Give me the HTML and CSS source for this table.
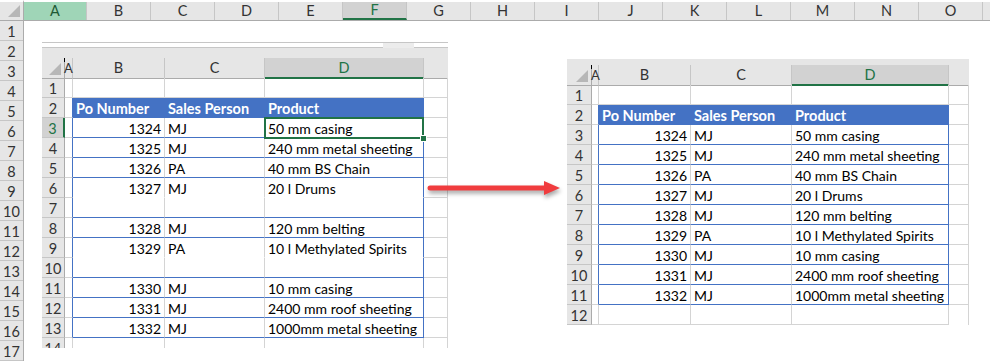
FILE: index.html
```html
<!DOCTYPE html>
<html lang="en">
<head>
    <meta charset="UTF-8">
    <meta name="viewport" content="width=device-width, initial-scale=1.0">
    <title>Remove blank rows</title>
    <link rel="stylesheet" href="styles.css">
</head>
<body>
    <div class="page">
        <div class="sheet">
            <div class="corner"></div>
            <div class="col-heads">
                <div class="ch picked">A</div>
                <div class="ch">B</div>
                <div class="ch">C</div>
                <div class="ch">D</div>
                <div class="ch">E</div>
                <div class="ch cur">F</div>
                <div class="ch">G</div>
                <div class="ch">H</div>
                <div class="ch">I</div>
                <div class="ch">J</div>
                <div class="ch">K</div>
                <div class="ch">L</div>
                <div class="ch">M</div>
                <div class="ch">N</div>
                <div class="ch">O</div>
                <div class="ch rest"></div>
            </div>
            <div class="row-heads">
                <div class="rh">1</div>
                <div class="rh">2</div>
                <div class="rh">3</div>
                <div class="rh">4</div>
                <div class="rh">5</div>
                <div class="rh">6</div>
                <div class="rh">7</div>
                <div class="rh">8</div>
                <div class="rh">9</div>
                <div class="rh">10</div>
                <div class="rh">11</div>
                <div class="rh">12</div>
                <div class="rh">13</div>
                <div class="rh">14</div>
                <div class="rh">15</div>
                <div class="rh">16</div>
                <div class="rh">17</div>
            </div>
            <div class="cells"></div>
        </div>

        <!-- before: records with blank rows -->
        <div class="shot before">
            <div class="bar"><span class="bar-tab"></span></div>
            <div class="row head">
                <div class="corner-sm"></div><div class="hc col-a">A</div><div class="hc">B</div><div class="hc">C</div><div class="hc cur">D</div><div class="hc"></div>
            </div>
            <div class="row">
                <div class="rh">1</div><div class="c"></div><div class="c"></div><div class="c"></div><div class="c"></div><div class="c"></div>
            </div>
            <div class="row thead">
                <div class="rh">2</div><div class="c"></div><div class="c">Po Number</div><div class="c">Sales Person</div><div class="c">Product</div><div class="c"></div>
            </div>
            <div class="row rec">
                <div class="rh cur">3</div><div class="c"></div><div class="c num">1324</div><div class="c">MJ</div><div class="c">50 mm casing</div><div class="c"></div>
            </div>
            <div class="row rec">
                <div class="rh">4</div><div class="c"></div><div class="c num">1325</div><div class="c">MJ</div><div class="c">240 mm metal sheeting</div><div class="c"></div>
            </div>
            <div class="row rec">
                <div class="rh">5</div><div class="c"></div><div class="c num">1326</div><div class="c">PA</div><div class="c">40 mm BS Chain</div><div class="c"></div>
            </div>
            <div class="row rec open">
                <div class="rh">6</div><div class="c"></div><div class="c num">1327</div><div class="c">MJ</div><div class="c">20 l Drums</div><div class="c"></div>
            </div>
            <div class="row rec">
                <div class="rh">7</div><div class="c"></div><div class="c"></div><div class="c"></div><div class="c"></div><div class="c"></div>
            </div>
            <div class="row rec">
                <div class="rh">8</div><div class="c"></div><div class="c num">1328</div><div class="c">MJ</div><div class="c">120 mm belting</div><div class="c"></div>
            </div>
            <div class="row rec open">
                <div class="rh">9</div><div class="c"></div><div class="c num">1329</div><div class="c">PA</div><div class="c">10 l Methylated Spirits</div><div class="c"></div>
            </div>
            <div class="row rec">
                <div class="rh">10</div><div class="c"></div><div class="c"></div><div class="c"></div><div class="c"></div><div class="c"></div>
            </div>
            <div class="row rec">
                <div class="rh">11</div><div class="c"></div><div class="c num">1330</div><div class="c">MJ</div><div class="c">10 mm casing</div><div class="c"></div>
            </div>
            <div class="row rec">
                <div class="rh">12</div><div class="c"></div><div class="c num">1331</div><div class="c">MJ</div><div class="c">2400 mm roof sheeting</div><div class="c"></div>
            </div>
            <div class="row rec">
                <div class="rh">13</div><div class="c"></div><div class="c num">1332</div><div class="c">MJ</div><div class="c">1000mm metal sheeting</div><div class="c"></div>
            </div>
            <div class="row">
                <div class="rh">14</div><div class="c"></div><div class="c"></div><div class="c"></div><div class="c"></div><div class="c"></div>
            </div>
            <div class="sel"></div>
        </div>

        <svg class="arrow" width="140" height="26" viewBox="0 0 140 26">
            <line x1="4" y1="10" x2="120" y2="10" stroke="#f03c3e" stroke-width="5" stroke-linecap="round"/>
            <polygon points="118,3 134,10 118,17" fill="#f03c3e"/>
        </svg>

        <!-- after: blank rows removed -->
        <div class="shot after">
            <div class="bar"></div>
            <div class="row head">
                <div class="corner-sm"></div><div class="hc col-a">A</div><div class="hc">B</div><div class="hc">C</div><div class="hc cur">D</div><div class="hc"></div>
            </div>
            <div class="row">
                <div class="rh">1</div><div class="c"></div><div class="c"></div><div class="c"></div><div class="c"></div><div class="c"></div>
            </div>
            <div class="row thead">
                <div class="rh">2</div><div class="c"></div><div class="c">Po Number</div><div class="c">Sales Person</div><div class="c">Product</div><div class="c"></div>
            </div>
            <div class="row rec">
                <div class="rh">3</div><div class="c"></div><div class="c num">1324</div><div class="c">MJ</div><div class="c">50 mm casing</div><div class="c"></div>
            </div>
            <div class="row rec">
                <div class="rh">4</div><div class="c"></div><div class="c num">1325</div><div class="c">MJ</div><div class="c">240 mm metal sheeting</div><div class="c"></div>
            </div>
            <div class="row rec">
                <div class="rh">5</div><div class="c"></div><div class="c num">1326</div><div class="c">PA</div><div class="c">40 mm BS Chain</div><div class="c"></div>
            </div>
            <div class="row rec">
                <div class="rh">6</div><div class="c"></div><div class="c num">1327</div><div class="c">MJ</div><div class="c">20 l Drums</div><div class="c"></div>
            </div>
            <div class="row rec">
                <div class="rh">7</div><div class="c"></div><div class="c num">1328</div><div class="c">MJ</div><div class="c">120 mm belting</div><div class="c"></div>
            </div>
            <div class="row rec">
                <div class="rh">8</div><div class="c"></div><div class="c num">1329</div><div class="c">PA</div><div class="c">10 l Methylated Spirits</div><div class="c"></div>
            </div>
            <div class="row rec">
                <div class="rh">9</div><div class="c"></div><div class="c num">1330</div><div class="c">MJ</div><div class="c">10 mm casing</div><div class="c"></div>
            </div>
            <div class="row rec">
                <div class="rh">10</div><div class="c"></div><div class="c num">1331</div><div class="c">MJ</div><div class="c">2400 mm roof sheeting</div><div class="c"></div>
            </div>
            <div class="row rec">
                <div class="rh">11</div><div class="c"></div><div class="c num">1332</div><div class="c">MJ</div><div class="c">1000mm metal sheeting</div><div class="c"></div>
            </div>
            <div class="row last">
                <div class="rh">12</div><div class="c"></div><div class="c"></div><div class="c"></div><div class="c"></div><div class="c"></div>
            </div>
        </div>
    </div>
</body>
</html>
```

FILE: styles.css
```css
body {
    margin: 0;
    background: #fff;
    font-family: Lato, "Open Sans", sans-serif;
    font-size: 14px;
    color: #000;
    overflow: hidden;
}

.page {
    position: relative;
    width: 990px;
    height: 361px;
    overflow: hidden;
}

/* outer sheet */

.sheet {
    display: grid;
    grid-template-columns: 24px 1fr;
    grid-template-rows: 21px 340px;
}

.corner {
    position: relative;
    background: #e6e6e6;
    border-top: 2px solid #fff;
    border-right: 1px solid #ababab;
    border-bottom: 1px solid #ababab;
    box-sizing: border-box;
}

.corner::after,
.corner-sm::after {
    content: "";
    position: absolute;
    right: 3px;
    bottom: 3px;
    width: 12px;
    height: 12px;
    background: #b7b7b7;
    clip-path: polygon(100% 0, 100% 100%, 0 100%);
}

.col-heads {
    display: flex;
    background: #e6e6e6;
    border-top: 2px solid #fff;
    border-bottom: 1px solid #ababab;
    box-sizing: border-box;
}

.ch {
    flex: 0 0 64px;
    box-sizing: border-box;
    border-right: 1px solid #c6c6c6;
    text-align: center;
    line-height: 18px;
    font-size: 14.5px;
    color: #333;
}

.ch.rest {
    flex: 1;
    border-right: none;
}

.ch.picked {
    flex-basis: 63px;
    background: #9fd5b7;
    color: #1e5a35;
}

.ch.cur {
    background: #d2d2d2;
    color: #217346;
    border-bottom: 2px solid #217346;
    line-height: 16px;
}

.row-heads {
    display: flex;
    flex-direction: column;
    background: #e6e6e6;
    border-right: 1px solid #ababab;
    box-sizing: border-box;
}

.rh {
    height: 20px;
    flex: 0 0 20px;
    box-sizing: border-box;
    border-bottom: 1px solid #c6c6c6;
    text-align: center;
    line-height: 21px;
    font-size: 14.5px;
    color: #333;
}

/* pasted screenshots */

.shot {
    position: absolute;
    background: #fff;
    overflow: hidden;
}

.shot.before {
    left: 42px;
    top: 42px;
    width: 406px;
    height: 306px;
    --cols: 23px 8px 92px 100px 159px 24px;
}

.shot.after {
    left: 567px;
    top: 59px;
    width: 402px;
    height: 266px;
    --cols: 25px 7px 92px 101px 157px 20px;
}

.bar {
    position: relative;
    height: 16px;
    background: linear-gradient(#fff 0 4px, #c6c6c6 4px 5px, #e6e6e6 5px);
    border-top: 1px solid #c6c6c6;
    box-sizing: border-box;
}

.after .bar {
    height: 6px;
    background: #e6e6e6;
    border-top: none;
}

.bar-tab {
    position: absolute;
    left: 341px;
    top: 0;
    width: 31px;
    height: 5px;
    background: #ececec;
}

.row {
    display: grid;
    grid-template-columns: var(--cols);
    height: 20px;
}

.row .rh {
    background: #e6e6e6;
    border-right: 1px solid #ababab;
    border-bottom-color: #c6c6c6;
}

.row .rh.cur {
    background: #d2d2d2;
    color: #217346;
    border-right: 2px solid #217346;
}

.c {
    box-sizing: border-box;
    border-right: 1px solid #d4d4d4;
    border-bottom: 1px solid #d4d4d4;
    padding: 0 3px;
    line-height: 21px;
    white-space: nowrap;
    overflow: hidden;
}

.c.num {
    text-align: right;
}

.row.head {
    background: #e6e6e6;
}

.corner-sm {
    position: relative;
    border-right: 1px solid #ababab;
    border-bottom: 1px solid #ababab;
}

.hc {
    box-sizing: border-box;
    border-right: 1px solid #c6c6c6;
    border-bottom: 1px solid #ababab;
    text-align: center;
    line-height: 20px;
    font-size: 14.5px;
    color: #333;
    overflow: hidden;
}

.hc.col-a {
    position: relative;
    font-size: 13px;
    overflow: visible;
    text-indent: -1px;
}

.hc.col-a::before {
    content: "";
    position: absolute;
    left: -1px;
    top: 0;
    width: 1px;
    height: 4px;
    background: #000;
}

.hc.cur {
    background: #d2d2d2;
    color: #217346;
    border-bottom: 2px solid #217346;
}

.hc:last-child {
    border-right: none;
}

/* table inside the screenshots */

.thead .c:nth-child(2),
.rec .c:nth-child(2) {
    border-right-color: #4472c4;
}

.thead .c:nth-child(n+3):nth-child(-n+5),
.rec .c:nth-child(n+3):nth-child(-n+5) {
    border-bottom-color: #4472c4;
}

.thead .c:nth-child(5),
.rec .c:nth-child(5) {
    border-right-color: #4472c4;
}

.thead .c:nth-child(n+3):nth-child(-n+5) {
    background: #4472c4;
    border-right-color: #4472c4;
    color: #fff;
    font-weight: bold;
    font-size: 14.5px;
}

.rec.open .c:nth-child(n+3):nth-child(-n+5) {
    border-bottom-color: #fff;
}

.last .c:last-child {
    border-bottom: none;
}

.sel {
    position: absolute;
    left: 222px;
    top: 75px;
    width: 156px;
    height: 18px;
    border: 2px solid #217346;
}

.sel::after {
    content: "";
    position: absolute;
    right: -5px;
    bottom: -5px;
    width: 5px;
    height: 5px;
    background: #217346;
    border: 1px solid #fff;
}

.arrow {
    position: absolute;
    left: 426px;
    top: 178px;
    filter: drop-shadow(1px 3px 2px rgba(0, 0, 0, 0.35));
}
```
